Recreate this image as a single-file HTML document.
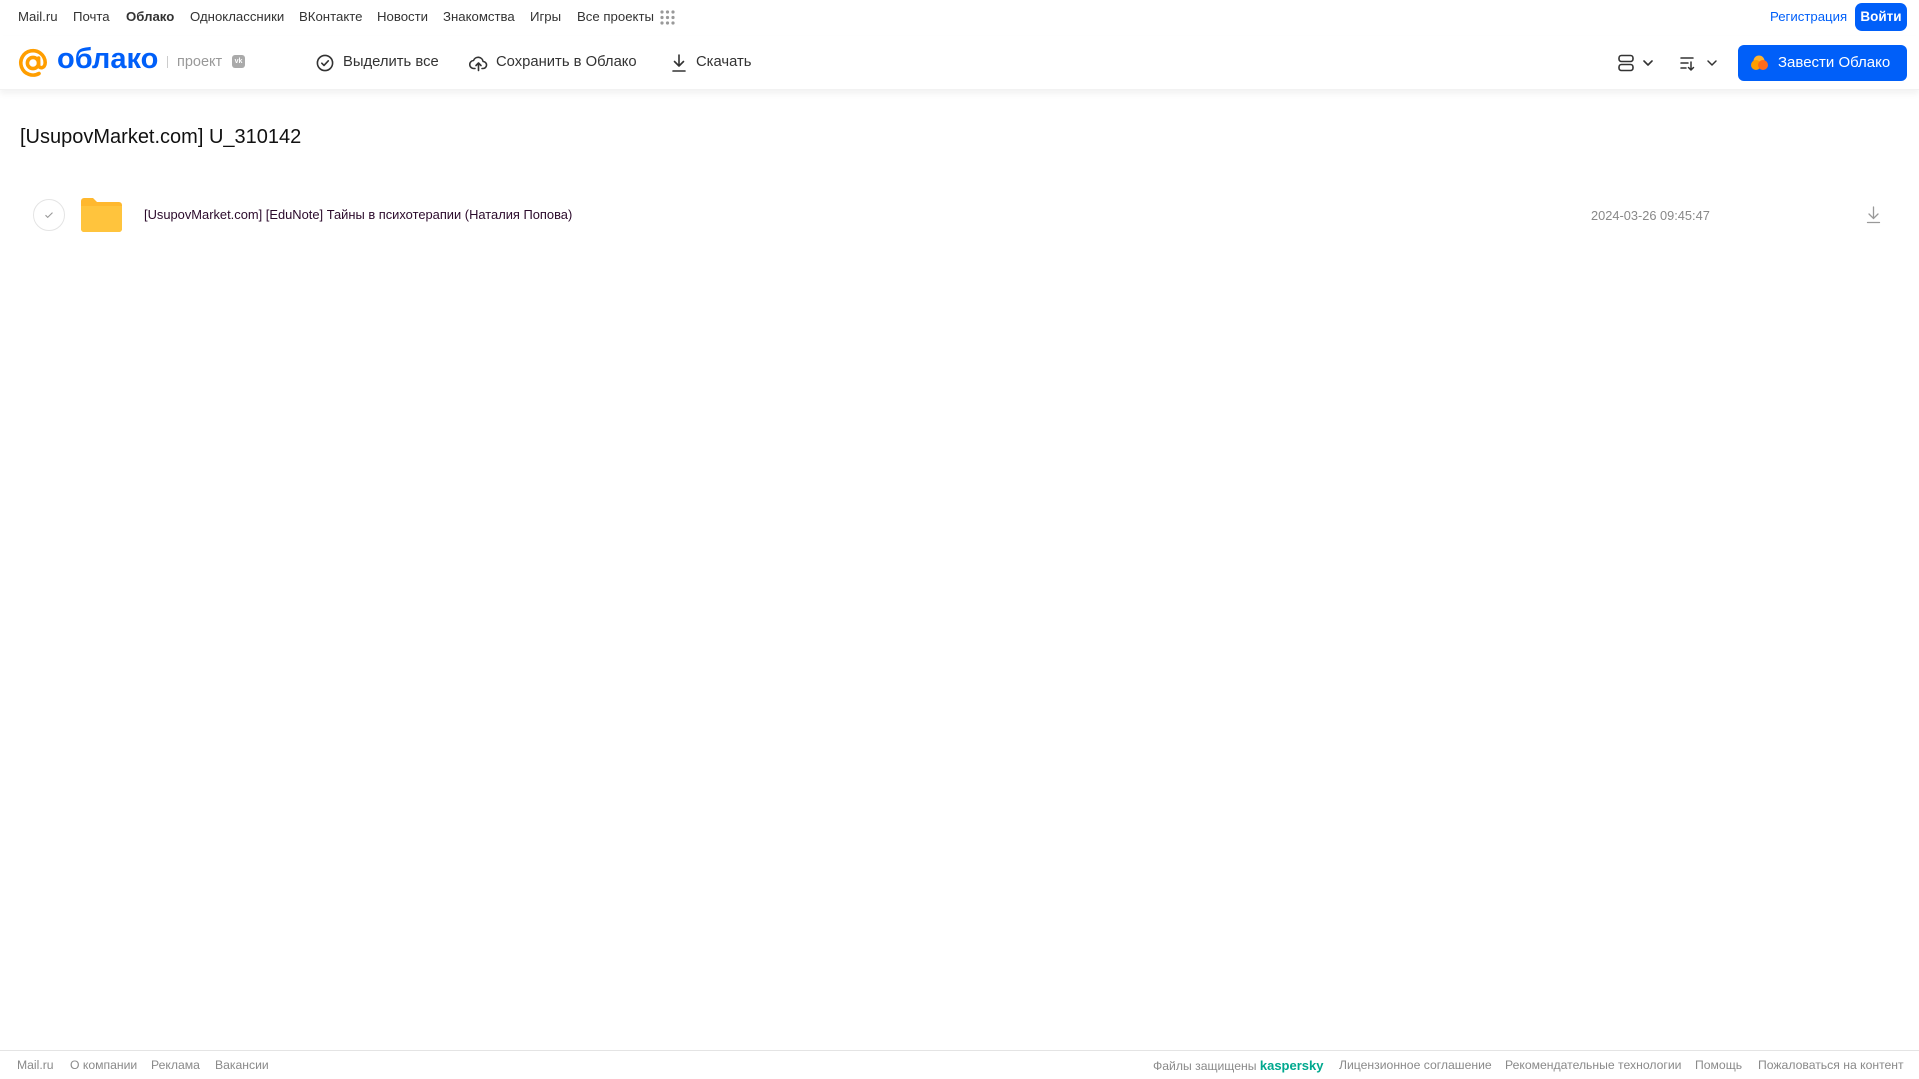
<!DOCTYPE html>
<html><head><meta charset="utf-8"><style>
*{margin:0;padding:0;box-sizing:border-box}
body{width:1919px;height:1079px;background:#fff;font-family:"Liberation Sans",Arial,sans-serif;position:relative;overflow:hidden;color:#333}
.a{position:absolute;white-space:nowrap}
.top{font-size:13.2px;color:#333;top:9px}
.hdr{position:absolute;left:0;top:36px;width:1919px;height:54px;box-shadow:0 4px 6px rgba(0,0,0,0.05);border-bottom:1px solid #f2f2f2}
.tb{font-size:14.8px;color:#333;top:54px}
.ft{font-size:12.2px;color:#8a8a8a;top:1058px}
</style></head><body>
<div class="a top" style="left:18px">Mail.ru</div>
<div class="a top" style="left:73px">Почта</div>
<div class="a top" style="left:126px;font-weight:bold">Облако</div>
<div class="a top" style="left:190px">Одноклассники</div>
<div class="a top" style="left:299px">ВКонтакте</div>
<div class="a top" style="left:377px">Новости</div>
<div class="a top" style="left:443px">Знакомства</div>
<div class="a top" style="left:530px">Игры</div>
<div class="a top" style="left:577px">Все проекты</div>
<svg class="a" style="left:660px;top:10px" width="15" height="15" viewBox="0 0 15 15" fill="#999"><circle cx="2" cy="2" r="1.6"/><circle cx="7.5" cy="2" r="1.6"/><circle cx="13" cy="2" r="1.6"/><circle cx="2" cy="7.5" r="1.6"/><circle cx="7.5" cy="7.5" r="1.6"/><circle cx="13" cy="7.5" r="1.6"/><circle cx="2" cy="13" r="1.6"/><circle cx="7.5" cy="13" r="1.6"/><circle cx="13" cy="13" r="1.6"/></svg>
<div class="a" style="left:1770px;top:9px;font-size:13.2px;color:#005ff9">Регистрация</div>
<div class="a" style="left:1855px;top:3px;width:52px;height:28px;background:#005ff9;border-radius:7px;color:#fff;font-size:13.5px;font-weight:bold;text-align:center;line-height:28px">Войти</div>

<div class="hdr"></div>
<svg class="a" style="left:18px;top:47px" width="32" height="32" viewBox="0 0 32 32" fill="none" stroke="#ff9e00" stroke-width="3.6" stroke-linecap="round"><circle cx="15" cy="16" r="5.6"/><path d="M20.6 11v7c0 4 6.6 4 6.6-2.5A12.2 12.2 0 1 0 21 26.5"/></svg>
<div class="a" style="left:57px;top:43px;font-size:29px;font-weight:bold;color:#005ff9">облако</div>
<div class="a" style="left:167px;top:56px;width:1px;height:12px;background:#ccc"></div>
<div class="a" style="left:177px;top:54px;font-size:14.5px;color:#999">проект</div>
<div class="a" style="left:232px;top:55px;width:13px;height:13px;background:#aaa;border-radius:3px;color:#fff;font-size:7px;font-weight:bold;text-align:center;line-height:13px">vk</div>

<svg class="a" style="left:316px;top:54px" width="18" height="18" viewBox="0 0 18 18" fill="none" stroke="#333" stroke-width="1.6"><circle cx="9" cy="9" r="7.6"/><path d="M5.8 9.2l2.2 2.2 4.3-4.6" stroke-linecap="round" stroke-linejoin="round"/></svg>
<div class="a tb" style="left:343px">Выделить все</div>
<svg class="a" style="left:469px;top:54px" width="19" height="18" viewBox="0 0 19 18" fill="none" stroke="#333" stroke-width="1.6" stroke-linecap="round" stroke-linejoin="round"><path d="M6 14.5H5a4 4 0 0 1-.5-8 5 5 0 0 1 9.6 1A3.5 3.5 0 0 1 14 14.5h-1"/><path d="M9.5 16.5V9M7 11.5l2.5-2.5 2.5 2.5"/></svg>
<div class="a tb" style="left:496px">Сохранить в Облако</div>
<svg class="a" style="left:671px;top:54px" width="16" height="18" viewBox="0 0 16 18" fill="none" stroke="#333" stroke-width="1.6" stroke-linecap="round" stroke-linejoin="round"><path d="M8 1v11M3.5 7.5 8 12l4.5-4.5M2 17h12"/></svg>
<div class="a tb" style="left:696px">Скачать</div>

<svg class="a" style="left:1618px;top:54px" width="40" height="18" viewBox="0 0 40 18" fill="none" stroke="#333" stroke-width="1.6"><rect x="1" y="1.5" width="14" height="6" rx="2.5"/><rect x="1" y="10.5" width="14" height="6" rx="2.5"/><path d="M26 7l4 4 4-4" stroke-linecap="round" stroke-linejoin="round"/></svg>
<svg class="a" style="left:1680px;top:54px" width="40" height="18" viewBox="0 0 40 18" fill="none" stroke="#333" stroke-width="1.5" stroke-linecap="round" stroke-linejoin="round"><path d="M1 4h12M1 9h7M1 14h5M11 8v8M8.5 13.5 11 16l2.5-2.5"/><path d="M28 7l4 4 4-4"/></svg>
<div class="a" style="left:1738px;top:45px;width:169px;height:36px;background:#005ff9;border-radius:6px"></div>
<svg class="a" style="left:1750px;top:54px" width="20" height="18" viewBox="0 0 20 18"><circle cx="9" cy="7" r="5.5" fill="#ffb22e"/><circle cx="6" cy="11" r="5" fill="#ff9e00"/><circle cx="13" cy="11" r="5" fill="#ff6b1a"/></svg>
<div class="a" style="left:1778px;top:54px;font-size:15px;color:#fff">Завести Облако</div>

<div class="a" style="left:20px;top:126px;font-size:20px;color:#111">[UsupovMarket.com] U_310142</div>

<div class="a" style="left:33px;top:199px;width:32px;height:32px;border:1px solid #e4e4e4;border-radius:50%"></div>
<svg class="a" style="left:44px;top:210px" width="10" height="10" viewBox="0 0 10 10" fill="none" stroke="#999" stroke-width="1.1"><path d="M1.5 5.2l2.2 2.2L8.5 2.6"/></svg>
<svg class="a" style="left:81px;top:198px" width="41" height="34" viewBox="0 0 41 34"><path d="M0 3a3 3 0 0 1 3-3h9l4 4h22a3 3 0 0 1 3 3v24a3 3 0 0 1-3 3H3a3 3 0 0 1-3-3z" fill="#ffb82e"/><path d="M0 8h41v23a3 3 0 0 1-3 3H3a3 3 0 0 1-3-3z" fill="#ffc43d"/></svg>
<div class="a" style="left:144px;top:207px;font-size:12.9px;color:#2b0a2b">[UsupovMarket.com] [EduNote] Тайны в психотерапии (Наталия Попова)</div>
<div class="a" style="left:1591px;top:208px;font-size:12.8px;color:#888">2024-03-26 09:45:47</div>
<svg class="a" style="left:1866px;top:206px" width="15" height="18" viewBox="0 0 15 18" fill="none" stroke="#999" stroke-width="1.3" stroke-linecap="round"><path d="M7.5 1v11M3 8l4.5 4.5L12 8M1.5 16.5h12"/></svg>

<div class="a" style="left:0;top:1050px;width:1919px;height:1px;background:#e4e4e4"></div>
<div class="a ft" style="left:17px">Mail.ru</div>
<div class="a ft" style="left:70px">О компании</div>
<div class="a ft" style="left:151px">Реклама</div>
<div class="a ft" style="left:215px">Вакансии</div>
<div class="a ft" style="left:1153px">Файлы защищены <b style="color:#00a88e;font-size:13px">kaspersky</b></div>
<div class="a ft" style="left:1339px">Лицензионное соглашение</div>
<div class="a ft" style="left:1505px">Рекомендательные технологии</div>
<div class="a ft" style="left:1695px">Помощь</div>
<div class="a ft" style="left:1758px">Пожаловаться на контент</div>
</body></html>
